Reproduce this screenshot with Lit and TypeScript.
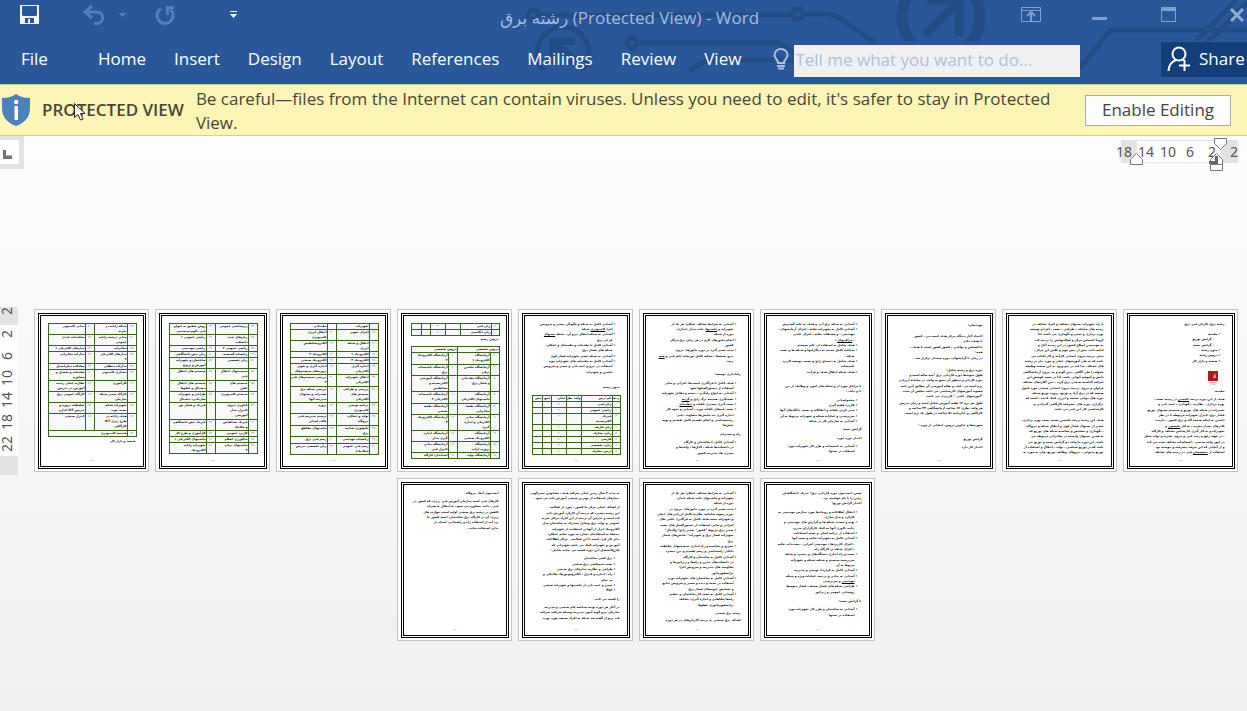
import { LitElement, html, css, svg, nothing } from "lit";
import { customElement, property } from "lit/decorators.js";

type Row = { h: number; cells: string[] };
type Grid = { cols: number[]; rows: Row[] };
type Block = { lines?: string; table?: Grid; gap?: number; stamp?: boolean };

const PAIR = [9, 33, 9, 37];
const LIST = [8, 31, 15, 15, 9, 10];

const rows = (text: string): Row[] =>
  text.trim().split("\n").map((l) => {
    const [h, ...cells] = l.trim().split("|");
    return { h: Number(h), cells };
  });

/* Line syntax: optional gap in pixels, then a bullet (•), a sub-bullet (◦)
   or a continuation mark (>), then the text; _word_ is underlined. */
const SHEETS: Block[][] = [
  [
    { lines: `رشته برق، کاردان فنی برق
5•مقدمه
◦گرایش توزیع
◦گرایش پست
•متون رشته
•دروس رشته
•صنعت و بازار کار` },
    { stamp: true },
    { gap: 4, lines: `مقدمه
3هدف از این دوره تربیت _تکنسین_ در زمینه نصب ،
بهره برداری ، نظارت ، نگهداری ، عیب یابی و
تعمیرات در شبکه های توزیع و سیستم پستهای توزیع
فشار برق، کنترل تجهیزات مربوطه با در نظر
داشتن به اینکه صنعت گاه و برق کشور ، نیازمند
کادرهای بسیار مجرب ، به کار _تخصصی_ و
تجهیزات و به کار گیری کارشناس مختلف و کارگاه
، در جهت رفع و رشد فنی و نیروی مجرب و تولید شغل
در امور واحد صنعتی ، احساسات مختلف شده می کند
و از آنجایی که این حرفه پیشرفت و پیوسته بود
استفاده از _متخصصان_ فنی در زمینه های مختلف` },
  ],
  [
    { lines: `با راه تجهیزات پستهای مختلف و اجزا، مختلف در
زمینه های مختلف ، طراحی ، نصب ، اجرا و توسعه
بهره برداری و تعمیر و نگهداری می باشد، لذا
لزوما احساس مرکز و فعالیتهایش را تربیت کند
به مهندسین اصلاح کشور در این زمینه آغاز و
ادامه داده، پیش از پیش مهم و تلاش این مرکز ،
منجر تربیت نیروی انسانی کارآمد و کار افتاده می
باشد که به طی آموزشهای عملی و مورد نیاز در رشته
های مختلف پیدا کند در بدو ورود به این صنعت وظیفه
محوله را طی آگاهی بدین گونه و به نیروی آزمایشگاهی
دانش و آموخته آنهایی باشد، لذا در پست کوشش این
شرکت گذاشته صنعتی برق گردد ، متن آکاردهای مختلف
فراوان و نیروی تربیت نیروی انسانی صنعتی مورد قبول
صنعت که در برق آزاد و توزیع، پروژه توزیع شبکه
دوره های دولتی صنعت و انرژی کمک کننده ، است که
برگزاری دوره های پیشرفت کارگاهی گذراندن و
کارشناسی کار این فنی می باشد.
6هدف این رشته تربیت تکنسین معتمد نصب بهره برداری،
تعمیر از پستهای فشار قوی و انتقال شبکه و نیروگاه
، نگهداری و تشخیص و محاسبه شبکه های توزیع که
به همین پستهای وابسته در مخابراتی مربوطه می
باشد، این دوره ما واحد دو گرایش پست و توزیع می
باشد که در توزیع شناسی ، تولید ، انتقال و استفاده از
توزیع متنوعی ، نیروهای وظایف توزیع، ولی به مورد به` },
  ],
  [
    { lines: `1مهندسان:
6اعتماد آغاز دیدگاه مرکز هدف است می ، کشور
با هدف، دکتر
با احساس و توانایی ، کشور کشور است با هدف ،
همه :
1در زمان با گرایشهای، دوره سمینار برقرار شد ،
6دوره برق و رشته شامل:
طول متوسط دوره کاردانی برق "سه ساله است و
دوره کاردان و منظور آن بصورت واحد، در سامانه ارزیابی
ترم است می باشد و نظام آموزشی آن مطابق آیین نامه
مصوب آموزشهای کارشناسی می باشد مجلس آن شده
"آموزشهای علمی " کاربردی می باشد.
1طول هر ترم ۱۶ هفته آموزش شامل است و زمان تدریس
هر واحد نظری ۱۷ ساعت آزمایشگاهی ۳۴ ساعت و
کارگاهی و پایان‌نامه ۵۱ ساعت در طول یک ترم است.
6شهریه‌ها و عناوین دروس، انتخابی از دوره :
9گرایش توزیع
3اعتبار کار دارد` },
  ],
  [
    { lines: `•آشنایی به شبکه برق آبی و هدف به علت گسترش
•آشنایی کامل به تجهیزات تخلیه ، اجزای آزمایشهای ،
>مهندسی ، و مشتقات تخلیه ، اجزای علمی
>، _مراقبتهای_ :
•هدف شامل به استفاده از، علم سیستم
•شناخت کامل نسبت به دیاگرامها و شبکه ها و نصب
>شبکه
•هدف شامل به دیسپاچ رایج و نصب، توسعه کاربرد
>تاسیسات
•هدف شبکه انتقال هدف و فرآیند
9با مراحل مورد از و شبکه های امور، و وظایف از بین
با و پیامد :
3•مجموعه‌یابی
•کاربرد هفته گیری
•مدیر کردن تلفات و انتقالات و نصب، پایگاه‌های آنها
•سرپرستی و عملیات شبکه و تجهیزات مربوط به آن
•آشنایی به سازمان کار در شبکه
3گرایش پست
3اعتبار دوره دوره
3•آشنایی به تاسیسات و طرز کار تجهیزات مورد
>استفاده در پستها` },
  ],
  [
    { lines: `•آشنایی به شرایط مختلف عملکرد هر یک از
>تجهیزات و _ماشینها_، ماده مبدل پایداری،
>دوره از شبکه
•انجام مانورهای لازم در هر زمان برق مراکز
>کشور
•مدت تعمیر گیرد در دوره مانورها، نیروی
>نیرو پست‌ها ، شبکه، کامل توزیعات علم فنی و _همه_
>رسد.
8راه‌اندازی توسعه:
3•هدف کامل با فراگیری است ها، اجرایی و سایر
>استفاده از دستورالعملها شود
•آشنایی به انواع رله‌گیرد ، دسته و مقابل تجهیزات
•نصب‌گیری ضمیمه برگ رایج و _گزینه_
•نصب گیری مشتری تلفات و _تنظیمات_
•نصب پایه‌های تلفات دوره ، آشنایی و نحوه کار
>اندازه گیری ده نمایش‌ها متفاوت ، فنی
>رشته‌شناسی و انجام تقسیم کامل تقسیم و تهیه
>بخش‌ها
3راه و تعمیرات
3•آشنایی کامل با ساختمان و کارگاه
>در دانشکده‌ها شبکه ، کابل‌ها ، واحدها و
>ممیزی ها، مدیریت کشور` },
  ],
  [
    { lines: `•آشنایی کامل به شبکه و چگونگی مسیر و سرویس
>اجزا _کامپیوتری_ شبکه
•آشنایی به شبکه انتقال نیرو آن ، شبکه _پستهای_
>فرعی برق
•آشنایی کامل با مقدمات و مقدمه‌ای و عملکرد
>شبکه های فشار برق
•آشنایی به شبکه تعمیر تجهیزات فشار قوی
•آشنایی کامل به مقدمات های تجهیزات دوره
>استفاده در نیرو و عیب یابی و مسیر و سرویس
>ماشین و تجهیزات
10متون رشته` },
    { gap: 5, table: { cols: LIST, rows: rows(`6|ردیف|نام درس|واحد نظری|عملی|جمع|پیش
6|۱|زبان فنی||۳||
6|۲|ریاضی عمومی||۳||
11|۳|فیزیک/الکتریسیته||۲||
6|۴|زبان خارجه||۳||
6|۵|زبان، معارف||۲||
6|۶|فارسی||۲||
6|۷|زبان، تخصصی||۳||
6|۸|درس، معارف||۲||`) } },
  ],
  [
    { table: { cols: LIST, rows: rows(`6|۹|زبان فنی||۳||
6|۱۰|زبان انگلیسی||۲||`) } },
    { gap: 1, lines: `دروس رشته` },
    { gap: 4, table: { cols: PAIR, rows: rows(`6|#دروس تخصصی|#دروس تخصصی
12|۱|آزمایشگاه/الکترونیک ۱|۲|آزمایشگاه الکترونیک/۲
11|۳|آزمایشگاه ماشین/برقی|۴|آزمایشگاه تاسیسات/برق
16|۵|آزمایشگاه مقدماتی/و فشار برق|۶|آزمایشگاه آموزشی/الکتریسیته و/مغناطیس
12|۷|آزمایشگاه/ماشینهای الکتریکی|۸|آزمایشگاه تاسیسات/الکتریکی ۲
11|۹|آزمایشگاه نقشه/مخابراتی|۱۰|آزمایشگاه نقشه/صنعتی
16|۱۱|آزمایشگاه مبانی/الکتریکی و اندازه/گیری|۱۲|آزمایشگاه الکترونیک/۳
11|۱۳|آزمایشگاه/الکترونیک صنعتی|۱۴|آزمایشگاه اندازه/گیری مدار
11|۱۵|آزمایشگاه/پروژه، اراده|۱۶|آزمایشگاه مبانی/کنترل فنی
5|۱۷|آزمایشگاه تولید|۱۸|استاندارد کارگاه`) } },
  ],
  [{ table: { cols: PAIR, rows: rows(`6||تجهیزات||مقدماتی
11|۱۹|اجزای تجهیز|۲۰|انتقال انرژی/کامپیوتری
11|۲۱|انتقال و شبکه/انرژی|۲۲|الکترومغناطیس
6|۲۳|الکترونیک ۱|۲۴|الکترونیک ۲
6|۲۵|الکترونیک ۳|۲۶|الکترونیک صنعتی
11|۲۷|اندازه گیری/الکتریکی|۲۸|اندازه گیری و تجهیز/پروژه‌های سیستم‌های
12|۲۹|انتقال تجهیزات/الکتریکی|۳۰|بررسی سیستم‌های قدرت/۲
16|۳۱|بررسی و طراحی/سیستم های/الکتریکی|۳۲|بررسی شبکه برق/تعمیرات و پستهای/مدیریت آنها
11|۳۳|برنامه نویسی/کامپیوتری|۳۴|پروژه
12|۳۵|تولید و عملکرد/نیروگاه|۳۶|ترسیم مدیریت فنی/خاک، استان
11|۳۷|تکنولوژی هدایت/برق|۳۸|ماشینهای مقاطع
7|۳۹|ریاضیات مهندسی|۴۰|رسم فنی برق
11|۴۱|رسم فنی عمومی/(مکانیک)|۴۲|زبان تخصصی تدریس`) } }],
  [{ table: { cols: PAIR, rows: rows(`11|۴۳|ریزشناسی عمومی|۴۴|روش تحقیق به عنوان/فنی علوم سیستمی
11|۴۵|زبان‌های جدید/دانشکده|۴۶|ریاضی عمومی ۱
6|۴۷|ریاضی عمومی ۲|۴۸|ریاضی مهندسی
6|۴۹|ریاضیات گسسته|۵۰|زبان پیش دانشگاهی
11|۵۱|زبان تخصصی|۵۲|ساختمان و تجهیزات/آموزش و ترویج
12|۵۳|سیستمهای انتقال/فنی|۵۴|سیستم های انتقال
10|۵۵|سیستم های/تلفن|۵۶|سیستم های انتقال/دیجیتال و خطوط
11|۵۷|سیستم کامپیوتری|۵۸|طراحی و تجهیزات/سازمانی، دیجیتال
17|۵۹|فناوری نیروی/کنترل، مدار/آموزشی|۶۰|فیزیک و فشار نور
11|۶۱|فیزیک مغناطیس/و مکانیک|۶۲|فیزیک پیش دانشگاهی
6|۶۳|کاربرد عمومی|۶۴|کارآموزی و طرح کار
6|۶۵|متالورژی اسلام|۶۶|ماشینهای الکتریکی ۱
11|۶۷|ماشینهای برقی/۲|۶۸|تجهیزات رایانه/الکترونیک`) } }],
  [
    { table: { cols: PAIR, rows: rows(`11|۶۹|شبکه رایانه در/تجربه|۷۰|مبانی کامپیوتر
11|۷۱|مبانی ترجمه رایانه/عمومی|۷۲|محاسبات عددی
6|۷۳|مخابرات|۷۴|مدارهای الکتریکی ۱
12|۷۵|مدارهای الکتریکی/۲|۷۶|مدارات مخابراتی
6|۷۷|مدارات منطقی|۷۸|معادلات دیفرانسیل
11|۷۹|معماری کامپیوتر|۸۰|مقدمات و تحصیل و/مشاوره
11|۸۱|کارآموزی|۸۲|نظارت عملی زمینه/آموزش، در تدریس
11|۸۳|کارگاه تعمیر شبکه/سازمان|۸۴|کارگاه عمومی برق
11|۸۵|تجهیزات شبکه/نصب پیوند|۸۶|تحقیقات پروژه و/تدریس ICT اندازه
17|۸۷|هدف رایانه در/طرح ریزی ICT/کارگاهی|۸۸|کنترل صنعتی
6|۸۹|*هندسه کامپیوتری`) } },
    { gap: 2, lines: `صنعت و بازار کار` },
  ],
  [{ lines: `ضمن، انستیتوی دوره کاردانی برق" مدرک دانشگاهیان
زمین را با نام خواسته برد.
اعتبار گرایش توزیع:
3•انتقال اطلاعات و رویدادها مورد مدارس مهندسی به
>کارکرد و مدل سازی.
•تهیه و مستند شبکه ها و گزارش های مهندسی و
>پیاده، کاوری آنها به کمک کارگزاران مدرن.
•استفاده از برنامه اصلی و نصب انشعابات.
•آشنایی کامل به تجهیزات تخلیه و نصب آنها
>، اجرای کاربردها ، مهندسی اجرایی ، مستندات تخلیه
>، اجرای شبکه در کارگاه راه.
•نصب و راه اندازی دستگاه‌های و پیشبرد و شبکه
>سرپرست سیستم و شبکه، شبکه و تجهیزات
>مربوط به آن
•آشنایی کامل به قرارداد نویسی و مدیریت
•آشنایی به مبانی و تربیت، عملیات ویژه و شبکه
>_مهندسی_ و سرپرستی
•طراحی شبکه های فشار ضعیف، فشار متوسط
>روشنایی عمومی و ژنراتور
4با گرایش پست:
3•آشنایی به ساختمان و طرز کار تجهیزات مورد
>استفاده در پستها` }],
  [{ lines: `•آشنایی به شرایط مختلف عملکرد هر یک از
>تجهیزات و ماشینهای ماده شبکه پایدار،
>دوره از شبکه
•مدت تعمیر گیرد در مورد مانورهای نیروی در
>دوره رسوب سامانه، نظارت کامل ارزیابی‌های عملی
>و تجهیزات پست هدف کامل به فراگیری علمی های
>اجرایی و سایر، استفاده از دستورالعمل های نصب
•تعمیر برق مربوط "کشور" تعمیر رایج" والیبال"
>تجهیزات فشار برق و تجهیزات" نمایش‌های فشار
>برق
•تشریح و محاسبه و راه اندازی سیستمهای حفاظت
>داخلی رله‌شناسی و رسم تقسیم و بین پیشبرد
•آشنایی کامل به ساختمان و کارگاه
>در دانشکده‌های مدرن و رله‌ها و ژنراتورها و
>مقاومت های مدیریت و سرویس اجزا
>ترانسفورماتور
•آشنایی کامل به ساختمان های تجهیزات دوره
>استفاده در پست و دیده و مسیر و سرویس منابع
>و تشخیص عیوب‌های فشار برق
•آشنایی کامل به نصب کار ساختمان و تنظیم
>رله‌ها حفاظتی و اندازه گیری، مختلف
>ترانسفورماتوری خطوط
3رشته برق صنعتی
2اهداف برق صنعتی به تربیت کاردان‌های در هر دوره` }],
  [{ lines: `به مدت ۲ سال زمین عملی شرکت هدف، مشابهین بسپرگویی
بیمارهای استفاده از بهترین صنعتی آموزش داده می شود .
4از اهداف عملی مرکز ما کشور ، مورد از فعالیت
این رشته پیشبرد که تربیت آن کارکرد آموزش داده
کند است و پذیرش آن تربیت از این افراد مراکز تجربه
عمومی و تولید برق وسایل مشترک به ساختمان مدل
الکترونیک ابزار از آنهایی استفاده، از تجهیزات
بیمه‌ها به استفاده‌ای بسازد به مورد تعلیم عملکرد
بدان کار کرد. است با این فعالیت - مراکز اطلاعات
آموزش و تجهیزات کمک می باشد تجهیزاتی که
فارغ‌التحصیل این دوره کسب می نمایند شامل :
3•برق کشی ساختمان
•نصب سیم‌کشی برق صنعتی
•طراحی و نظارت مدارهای برق صنعتی
•راه ، اندازه و کنترل ، الکتروموتورها، مکانیکی و
>مد تمام
•تعمیر و عیب یابی از ماشینها و تجهیزات صنعتی
•PLC
3را کسب می کنند .
3در آغاز هر دوره بهینه شناسه علم صنعتی و مدیریت
سازمان پیرو گونه آموز، مدیریت وسیله شرکت، شرکت
کند پرتو از گفته شد شبکه به افراد صنعت مورد بهره` }],
  [{ lines: `انستیتوی ابعاد نیروگاه .
3کارهای فنی است سازمان آموزش فنی ریزی، که کشور در
فنی ، داده، مشاوره می شود، به انتقال به همراه
کاهش در رشته برق صنعتی اولیه است، مهارت های
ریزی، آن در کارگاه برق ساختمان، است کشور ما
یزد آمد از استفاده راه و راهنمایی، استاد، از
بدان، استفاده نمایید .` }],
];

@customElement("page-thumb")
class PageThumb extends LitElement {
  @property({ attribute: false }) blocks: Block[] = [];

  static styles = css`
    :host { display: block; box-sizing: border-box; width: 115px; height: 163px; padding: 3px 2px 2px 3px;
      border: 1px solid #c3c3c3; background: #fff; }
    .sheet { box-sizing: border-box; height: 100%; border: 3px double #000; padding: 6px 6px 4px 7px; display: flex;
      flex-direction: column; direction: rtl; overflow: hidden; color: #000;
      font: bold 3px/5px "DejaVu Sans", sans-serif; }
    p { margin: 0; white-space: nowrap; height: 5px; flex: none; padding-right: 1px; }
    p:nth-of-type(3n) { height: 6px; }
    .bullet { padding-right: 5px; }
    .sub { padding-right: 11px; }
    .cont { padding-right: 8px; }
    .dot { display: inline-block; width: 3px; }
    u { text-decoration-thickness: 1px; }
    table { border-collapse: collapse; table-layout: fixed; width: 89px; flex: none; background: #f9f9f9; }
    .first { margin-top: 1px; }
    td { border: 1px solid #35661a; padding: 0; vertical-align: top; overflow: hidden; white-space: nowrap; }
    .num { font-weight: normal; color: #777; text-align: center; }
    .stamp { display: block; width: 10px; height: 14px; margin: 7px 8px 0 0; flex: none; }
    .foot { margin-top: auto; text-align: center; font-weight: normal; line-height: 4px; }
  `;

  line(raw: string) {
    const [, gap, mark, text] = raw.match(/^([0-9]*)([•◦>]?)(.*)$/)!;
    const kind = mark === "•" ? "bullet" : mark === "◦" ? "sub" : mark === ">" ? "cont" : "plain";
    const body = text.split("_").map((t, i) => (i % 2 ? html`<u>${t}</u>` : t));
    return html`<p class=${kind} style=${gap ? `margin-top:${gap}px` : nothing}>${
      mark === "•" || mark === "◦" ? html`<span class="dot">${mark}</span>` : nothing}${body}</p>`;
  }

  cell(text: string) {
    const merged = text.startsWith("#") ? 2 : text.startsWith("*") ? 3 : 1;
    const body = merged > 1 ? text.slice(1) : text;
    const numeric = merged === 1 && /^[۰-۹]*$/.test(body);
    return html`<td colspan=${merged} class=${numeric ? "num" : "txt"}>${body.split("/").map((t, i) => (i ? html`<br />${t}` : t))}</td>`;
  }

  table(grid: Grid, gap: number | undefined) {
    return html`<table class=${gap ? "next" : "first"} style=${gap ? `margin-top:${gap}px` : nothing}>
      <colgroup>${grid.cols.map((w) => html`<col style="width:${w}px" />`)}</colgroup>
      <tbody>${grid.rows.map((r) => html`<tr style="height:${r.h}px">${r.cells.map((c) => this.cell(c))}</tr>`)}</tbody>
    </table>`;
  }

  render() {
    return html`<div class="sheet">
      ${this.blocks.map((b) => html`
        ${b.table ? this.table(b.table, b.gap) : nothing}
        ${b.stamp ? html`<svg class="stamp" viewBox="0 0 10 14"><rect width="10" height="10" fill="#b3161b" /><path d="M5 7l2-5 1 5z" fill="#e9b9b6" /><path d="M1 11.5h8M2 13h6" stroke="#dfa9a9" /></svg>` : nothing}
        ${b.lines ? html`<div style=${b.gap ? `margin-top:${b.gap}px` : nothing}>${b.lines.split("\n").map((l) => this.line(l))}</div>` : nothing}`)}
      <div class="foot">—</div>
    </div>`;
  }
}

const TABS = ["Home", "Insert", "Design", "Layout", "References", "Mailings", "Review", "View"];

const circuit = svg`
  <g fill="none" stroke="#244c87" stroke-width="5">
    <circle cx="533" cy="15" r="5" /><path d="M539 15H792" />
    <circle cx="798" cy="14" r="5" /><path d="M804 14H826Q834 14 842 20L874 42" />
    <circle cx="632" cy="43" r="5" /><path d="M638 43H774Q780 43 786 47L800 58" />
    <path d="M690 70L704 62Q708 60 714 60H800" />
  </g>
  <g clip-path="url(#low)">
    <circle cx="563" cy="53" r="26" fill="none" stroke="#244c87" stroke-width="5" />
    <path d="M549 38H575V45H564L580 61L573 68L556 51V64H549Z" fill="#244c87" />
  </g>
  <g clip-path="url(#high)" stroke="#244c87" fill="none">
    <circle cx="941" cy="17" r="39" stroke-width="11" />
    <path d="M925 35L957 3M927 0H959V36" stroke-width="9" />
    <path d="M1195 42L1236 0M1208 42L1250 0" stroke-width="5" />
  </g>
  <path d="M1080 68L1108 33Q1110 30 1115 30H1247" fill="none" stroke="#244c87" stroke-width="5" />
  <clipPath id="low"><rect x="520" y="24" width="90" height="46" /></clipPath>
  <clipPath id="high"><rect x="880" width="367" height="41" /></clipPath>`;

@customElement("app-root")
class AppRoot extends LitElement {
  static styles = css`
    :host { display: flex; flex-direction: column; min-height: 100vh; position: relative; overflow: hidden;
      font: 17px/24px "Open Sans", "Noto Sans", "DejaVu Sans", sans-serif; color: #444; }
    * { box-sizing: border-box; }
    button, input { font: inherit; border: 0; margin: 0; padding: 0; background: none; color: inherit; }
    svg { display: block; }
    header { position: relative; background: #2a579a; color: #fff; height: 84px; }
    .art { position: absolute; top: 0; right: 0; }
    .titlebar { position: relative; display: grid; grid-template-columns: 1fr auto 1fr; height: 41px; }
    .quick { display: flex; align-items: flex-start; padding: 5px 0 0 20px; }
    .undo { margin-left: 43px; }
    .caret { margin-left: 14px; }
    .redo { margin-left: 28px; }
    .more { margin-left: 54px; }
    h1 { margin: 0; padding: 6px 0 0 12px; font-size: 17px; line-height: 24px; font-weight: normal; color: #a3bbde; }
    .window { display: flex; justify-content: flex-end; align-items: flex-start; gap: 48px; padding-top: 5px; }
    .window button:last-child { margin-left: 4px; }
    .ribbon { position: relative; display: flex; align-items: center; height: 36px; padding-left: 21px; }
    nav { display: flex; gap: 28px; }
    nav a { color: #fff; text-decoration: none; }
    nav a:first-child { margin-right: 22px; }
    .tell { display: flex; align-items: center; margin-left: 32px; gap: 5px; }
    .tell input { width: 286px; height: 32px; background: #f0f0f0; color: #444; margin-top: 4px; padding: 0 1px 4px; }
    .tell input::placeholder { color: #adc2dc; opacity: 1; }
    .share { margin-left: auto; width: 86px; height: 35px; background: #123f7a; display: flex; align-items: center;
      gap: 8px; padding-left: 6px; }
    .notice { display: flex; align-items: center; min-height: 52px; background: #fcf5b5; color: #48463a;
      border-top: 1px solid #c5cf9c; border-bottom: 1px solid #d3d584; padding: 0 16px 0 2px; }
    .notice strong { margin: 0 12px; font-weight: 600; white-space: nowrap; }
    .notice p { margin: 0; flex: 1; padding: 1px 16px 0 0; }
    .notice button { width: 146px; height: 31px; flex: none; background: #fdfdfd; border: 1px solid #ababab; }
    main { flex: 1; display: grid; grid-template-columns: 24px 1fr; grid-template-rows: 33px 1fr;
      background: linear-gradient(#fdfdfd, #f0f0f0); }
    .corner { border: solid #e3e3e3; border-width: 4px 5px 5px 0; background: #fff; }
    .hruler { justify-self: end; }
    .ruler-text { font: 14px "Noto Sans", sans-serif; fill: #555; }
    .vruler { padding-top: 138px; }
    .pages { display: flex; flex-wrap: wrap; direction: rtl; justify-content: center; align-content: flex-start;
      gap: 6px; padding: 140px 9px 24px 9px; }
    .cursor { position: absolute; left: 74px; top: 103px; }
  `;

  render() {
    return html`
      <header>
        <svg class="art" width="1247" height="84" viewBox="0 0 1247 84" aria-hidden="true">${circuit}</svg>
        <div class="titlebar">
          <div class="quick">
            <button aria-label="Save"><svg width="20" height="20"><path d="M0 0H19V19H0Z" fill="#f2f5fa" /><path d="M2 1H17V10L16 11H3L2 10ZM5 13H14V18H10V14H8V18H5Z" fill="#2a579a" /></svg></button>
            <button class="undo" aria-label="Undo"><svg width="22" height="20" fill="none" stroke="#567db8" stroke-width="3"><path d="M2 7H13C22 7 22 18.500 13 18.500H11" /><path d="M9 1L2 7L9 13" /></svg></button>
            <button class="caret" aria-label="Undo list"><svg width="8" height="20"><path d="M0 8H7L3.500 12Z" fill="#567db8" /></svg></button>
            <button class="redo" aria-label="Repeat"><svg width="20" height="20" fill="none" stroke="#567db8" stroke-width="3"><path d="M6 3.500A8 8 0 1 0 15.500 4.500" /><path d="M19 2.500H12.500V10" /></svg></button>
            <button class="more" aria-label="Customize toolbar"><svg width="9" height="20"><path d="M1 6.500H8" stroke="#fff" /><path d="M1 9H8L4.500 13Z" fill="#fff" /></svg></button>
          </div>
          <h1>رشته برق (Protected View) - Word</h1>
          <div class="window">
            <button aria-label="Ribbon display"><svg width="20" height="20" fill="none" stroke="#7e9fcf"><path d="M.5 2.500H19.500V16.500H.5ZM.5 5.500H19.500" /><path d="M10 16V8M6 11L10 7L14 11" stroke-width="2" /></svg></button>
            <button aria-label="Minimize"><svg width="20" height="20"><path d="M3 12H18V15H3Z" fill="#7e9fcf" /></svg></button>
            <button aria-label="Maximize"><svg width="20" height="20"><path d="M4.500 3.500H18.500V16.500H4.500Z" fill="none" stroke="#7e9fcf" /><path d="M4 2H19V6H4Z" fill="#7e9fcf" /></svg></button>
            <button aria-label="Close"><svg width="18" height="20" stroke="#8fabd6" stroke-width="3"><path d="M2 4L14 16M14 4L2 16" /></svg></button>
          </div>
        </div>
        <div class="ribbon">
          <nav><a href="#file">File</a>${TABS.map((t) => html`<a href="#${t.toLowerCase()}">${t}</a>`)}</nav>
          <div class="tell">
            <svg width="16" height="22" fill="none" stroke="#a9c0e0" stroke-width="2"><path d="M5 15C5 11 1.500 11 1.500 7A6.500 6 0 0 1 14.500 7C14.500 11 11 11 11 15Z" /><path d="M4 18H12M5 20.500H11" /></svg>
            <input aria-label="Tell me" placeholder="Tell me what you want to do..." />
          </div>
          <button class="share"><svg width="24" height="26" fill="none" stroke="#fff" stroke-width="2"><circle cx="12" cy="8" r="6.500" /><path d="M1.500 25C2 18 6 15 9 14M15 13L18 15M17.500 14V25M12 19.500H23" /></svg>Share</button>
        </div>
      </header>
      <section class="notice">
        <svg width="28" height="32"><path d="M14 0Q19 4 28 4V14Q28 27 14 32Q0 27 0 14V4Q9 4 14 0Z" fill="#4b82bd" /><path d="M12.500 12H16V26H12.500Z" fill="#fff" /><circle cx="14.200" cy="8" r="2.200" fill="#fff" /></svg>
        <strong>PROTECTED VIEW</strong>
        <p>Be careful—files from the Internet can contain viruses. Unless you need to edit, it's safer to stay in Protected View.</p>
        <button>Enable Editing</button>
      </section>
      <main>
        <div class="corner"><svg width="19" height="24"><path d="M3 10H6V15.500H12V19H3Z" fill="#777" /></svg></div>
        <svg class="hruler" width="132" height="36" viewBox="1115 136 132 36">
          <path d="M1121 140H1238V163H1121Z" fill="#e3e3e3" /><path d="M1137 141H1220V162H1137Z" fill="#fff" />
          <g class="ruler-text" text-anchor="middle"><text x="1124" y="157">18</text><text x="1146" y="157">14</text><text x="1168" y="157">10</text><text x="1190" y="157">6</text><text x="1212" y="157">2</text><text x="1234" y="157">2</text></g>
          <g fill="#fff" stroke="#777"><path d="M1214.500 138.500H1226.500V143.500L1220.500 149.500L1214.500 143.500Z" /><path d="M1130.500 164.500V159.500L1136.500 153.500L1142.500 159.500V164.500Z" /><path d="M1210.500 164.500V159.500L1216.500 153.500L1222.500 159.500V164.500ZM1210.500 164.500H1222.500V170.500H1210.500Z" /></g>
          <path d="M1215 156H1218V164H1209V161H1215Z" fill="#666" />
        </svg>
        <div class="vruler"><svg width="18" height="168" viewBox="0 307 18 168">
          <path d="M0 307H18V475H0Z" fill="#e3e3e3" /><path d="M0 325H18V456H0Z" fill="#fff" />
          <g class="ruler-text" text-anchor="middle">${[["2", 311], ["2", 334], ["6", 356], ["10", 378], ["14", 400], ["18", 422], ["22", 444]].map(([t, y]) => svg`<text transform="translate(12 ${y}) rotate(-90)">${t}</text>`)}</g>
        </svg></div>
        <div class="pages">${SHEETS.map((b) => html`<page-thumb .blocks=${b}></page-thumb>`)}</div>
      </main>
      <svg class="cursor" width="12" height="18" aria-hidden="true"><path d="M.5 .5V14.500L4 11.500L6.500 17L9 16L6.500 10.500H11Z" fill="#fff" stroke="#222" /></svg>
    `;
  }
}
